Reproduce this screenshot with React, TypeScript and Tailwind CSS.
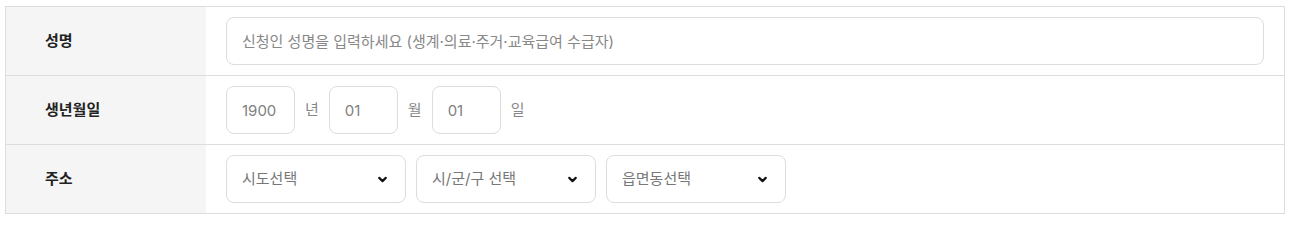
import { ChevronDown } from 'lucide-react';

const font = { fontFamily: 'Inter, "Noto Sans CJK KR", sans-serif' };

const Row = ({ label, children }: { label: string; children: React.ReactNode }) => (
  <div className="flex box-content h-[68px] border-b border-[#dddddd] last:border-b-0">
    <div className="w-[200px] shrink-0 bg-[#f5f5f5] flex items-center pl-[39px] text-[15px] font-bold text-[#222222]">
      {label}
    </div>
    <div className="flex-1 flex items-center gap-[10px] px-5">{children}</div>
  </div>
);

const DateBox = ({ value }: { value: string }) => (
  <input
    defaultValue={value}
    className="w-[69px] h-12 rounded-lg border border-[#dddddd] px-[15px] text-[15px] text-[#808080] outline-none"
  />
);

const Select = ({ label }: { label: string }) => (
  <div className="w-[180px] h-12 rounded-lg border border-[#dddddd] flex items-center justify-between pl-[15px] pr-[16px] text-[15px] text-[#777777]">
    <span>{label}</span>
    <ChevronDown size={13} strokeWidth={4} className="text-[#111111]" />
  </div>
);

export default function App() {
  return (
    <div className="bg-white px-[5px] pt-[6px]" style={font}>
      <div className="border border-[#dddddd]">
        <Row label="성명">
          <input
            placeholder="신청인 성명을 입력하세요 (생계·의료·주거·교육급여 수급자)"
            className="w-full h-12 rounded-lg border border-[#dddddd] px-[15px] text-[15px] text-[#333333] placeholder:text-[#888888] outline-none"
          />
        </Row>
        <Row label="생년월일">
          <DateBox value="1900" />
          <span className="text-[15px] text-[#888888]">년</span>
          <DateBox value="01" />
          <span className="text-[15px] text-[#888888]">월</span>
          <DateBox value="01" />
          <span className="text-[15px] text-[#888888]">일</span>
        </Row>
        <Row label="주소">
          <Select label="시도선택" />
          <Select label="시/군/구 선택" />
          <Select label="읍면동선택" />
        </Row>
      </div>
    </div>
  );
}
